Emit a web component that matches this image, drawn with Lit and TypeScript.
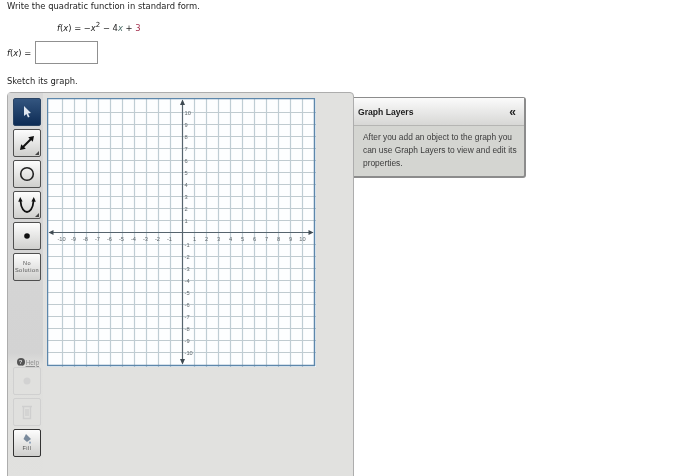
import { LitElement, html, css, svg } from "lit";
import { customElement } from "lit/decorators.js";

const X0 = 182.5, Y0 = 232.5, U = 12, L = 47.5, T = 98.5, R = 314.5, B = 365.5;
const ticks = Array.from({ length: 21 }, (_, i) => i - 10);

function plot() {
  const px = (v: number) => v - 47;
  const py = (v: number) => v - 98;
  return html`<svg class="plot" width="269" height="269" viewBox="0 0 269 269">
    <rect x="0" y="0" width="269" height="269" fill="#fdfeff"></rect>
    ${ticks.map((k) => k === 0 ? null : svg`
      <line x1=${px(X0 + k * U)} x2=${px(X0 + k * U)} y1="0" y2="269" stroke="#bfcdd4" stroke-width="1.2"></line>
      <line y1=${py(Y0 - k * U)} y2=${py(Y0 - k * U)} x1="0" x2="269" stroke="#c0cbd0" stroke-width="1.2"></line>
    `)}
    <rect x=${px(L)} y=${py(T)} width=${R - L} height=${B - T} fill="none" stroke="#5d87ab" stroke-width="1.5"></rect>
    <line x1=${px(L) + 2} x2=${px(R) - 2} y1=${py(Y0)} y2=${py(Y0)} stroke="#56646e" stroke-width="1.2"></line>
    <line y1=${py(T) + 2} y2=${py(B) - 2} x1=${px(X0)} x2=${px(X0)} stroke="#56646e" stroke-width="1.2"></line>
    <path d="M${px(L) + 1} ${py(Y0)} l5 -2.5 v5 z M${px(R) - 1} ${py(Y0)} l-5 -2.5 v5 z M${px(X0)} ${py(T) + 1} l-2.5 5.5 h5 z M${px(X0)} ${py(B) - 1} l-2.5 -5.5 h5 z" fill="#3f4a52"></path>
    ${ticks.map((k) => k === 0 ? null : svg`
      <text class="tick" x=${px(X0 + k * U) + (k < 0 ? -1 : 0)} y=${py(Y0) + 8} text-anchor="middle">${k}</text>
      <text class="tick" x=${px(X0) + 2} y=${py(Y0 - k * U) + 2.5}>${k}</text>
    `)}
  </svg>`;
}

@customElement("app-root")
export class AppRoot extends LitElement {
  static styles = css`
    :host {
      display: block;
      width: 700px;
      height: 476px;
      overflow: hidden;
      background: #fff;
      font-family: "DejaVu Sans", Verdana, sans-serif;
      font-size: 8.4px;
      color: #222;
      filter: blur(0.3px);
    }
    .q { padding: 0 0 0 7px; height: 12px; line-height: 12px; }
    .formula { margin: 10px 0 0 57px; height: 12px; line-height: 12px; white-space: pre; }
    .formula i { font-style: italic; }
    .formula sup { font-size: 7px; line-height: 0; vertical-align: 4px; }
    .formula .v { color: #4f6f6a; }
    .formula .c { color: #a5314f; }
    .answer { display: flex; align-items: center; gap: 4px; margin: 7px 0 0 7px; height: 23px; }
    .box { width: 61px; height: 21px; border: 1px solid #909090; background: #fff; }
    .sketch { margin: 11px 0 0 7px; height: 12px; line-height: 12px; }
    .row { display: flex; align-items: flex-start; margin: 5px 0 0 7px; }
    .panel {
      width: 345px;
      height: 400px;
      border: 1px solid #adadad;
      border-radius: 4px 4px 0 0;
      background: #e1e1df;
      display: flex;
    }
    .tools {
      width: 35px;
      height: 100%;
      flex: none;
      background: linear-gradient(#d8d8d8 0, #d3d3d3 260px, #dfdfdd 272px, #e1e1df 100%);
      display: flex;
      flex-direction: column;
      align-items: flex-end;
      padding-top: 5px;
      box-sizing: border-box;
      font-family: "Liberation Sans", Arial, sans-serif;
    }
    .btn {
      width: 26px;
      height: 26px;
      margin: 0 2px 3px 0;
      border: 1px solid #4f4f4f;
      border-radius: 2px;
      background: linear-gradient(#fdfdfd, #cfcfcd);
      display: flex;
      align-items: center;
      justify-content: center;
      position: relative;
      flex: none;
      color: #555;
      font-size: 5.6px;
      line-height: 7.5px;
      text-align: center;
      letter-spacing: 0.5px;
    }
    .btn.on { background: linear-gradient(#33557f, #0e2c55); border-color: #2a4464; }
    .btn.off { border-color: #d0d0d0; background: #e0e0de; color: #cfcfcf; }
    .btn.fill { flex-direction: column; border-color: #333; }
    .corner {
      position: absolute;
      right: 1px;
      bottom: 1px;
      width: 0;
      height: 0;
      border-left: 4px solid transparent;
      border-bottom: 4px solid #444;
    }
    .help {
      display: flex;
      align-items: center;
      gap: 1px;
      height: 10px;
      margin: 73px 4px 0 0;
      font-size: 6.5px;
      color: #8f8f8f;
      text-decoration: underline;
    }
    .help b {
      width: 8px;
      height: 8px;
      border-radius: 50%;
      background: #555;
      color: #ddd;
      font-size: 6px;
      line-height: 8px;
      text-align: center;
      display: block;
    }
    .plot-wrap { margin: 5px 0 0 4px; }
    .plot { display: block; }
    .tick { font: 5.7px "Liberation Sans", Arial, sans-serif; fill: #5f676c; }
    .layers {
      width: 170px;
      margin-top: 5px;
      border: 1px solid #8c8c8c;
      border-width: 1px 2px 2px 0;
      border-radius: 0 3px 3px 0;
      background: #d4d5d1;
      font-family: "Liberation Sans", Arial, sans-serif;
      flex: none;
    }
    .lhead {
      height: 27px;
      background: linear-gradient(#fbfbfb, #d7d7d5);
      border-bottom: 1px solid #b5b5b3;
      display: flex;
      align-items: center;
      justify-content: space-between;
      padding: 0 8px 0 4px;
      font-weight: bold;
      font-size: 8.6px;
      color: #222;
    }
    .lhead span:last-child { font-size: 12px; }
    .lbody {
      padding: 5px 6px 5px 9px;
      font-size: 8.4px;
      line-height: 13.2px;
      color: #3c3c3c;
    }
  `;

  render() {
    return html`
      <div class="q">Write the quadratic function in standard form.</div>
      <div class="formula"><i>f</i>(<i>x</i>) = −<i>x</i><sup>2</sup> − 4<i class="v">x</i> + <span class="c">3</span></div>
      <div class="answer"><span><i>f</i>(<i>x</i>) =</span><div class="box"></div></div>
      <div class="sketch">Sketch its graph.</div>
      <div class="row">
        <div class="panel">
          <div class="tools">
            <div class="btn on">
              <svg width="12" height="14" viewBox="0 0 12 14"><path d="M3 1 L3 11 L5.4 9 L7 12.5 L8.6 11.8 L7 8.4 L10 8 Z" fill="#dfe6f0"></path></svg>
            </div>
            <div class="btn">
              <svg width="18" height="18" viewBox="0 0 18 18"><path d="M4.5 13.5 L13.5 4.5" stroke="#111" stroke-width="2"></path><path d="M2 16 L3.2 10.2 L7.8 14.8 Z M16 2 L14.8 7.8 L10.2 3.2 Z" fill="#111"></path></svg>
              <span class="corner"></span>
            </div>
            <div class="btn">
              <svg width="18" height="18" viewBox="0 0 18 18"><circle cx="9" cy="9" r="6.3" fill="none" stroke="#222" stroke-width="1.6"></circle></svg>
            </div>
            <div class="btn">
              <svg width="20" height="20" viewBox="0 0 20 20"><path d="M3.5 6 C4 14 7.5 17 10 17 C12.5 17 16 14 16.5 6" fill="none" stroke="#111" stroke-width="1.8"></path><path d="M3.2 2 L1.2 6.8 L5.6 6.6 Z M16.8 2 L18.8 6.8 L14.4 6.6 Z" fill="#111"></path></svg>
              <span class="corner"></span>
            </div>
            <div class="btn">
              <svg width="8" height="8" viewBox="0 0 8 8"><circle cx="4" cy="4" r="2.8" fill="#111"></circle></svg>
            </div>
            <div class="btn">No<br />Solution</div>
            <div class="help"><b>?</b><span>Help</span></div>
            <div class="btn off">
              <svg width="10" height="10" viewBox="0 0 10 10"><circle cx="5" cy="5" r="3.5" fill="#d2d2d2"></circle></svg>
            </div>
            <div class="btn off">
              <svg width="12" height="16" viewBox="0 0 12 16"><path d="M1 2.5 H11 M2.5 3 V14.5 H9.5 V3 M5 5 V12 M7 5 V12" fill="none" stroke="#cfcfcf" stroke-width="1.4"></path></svg>
            </div>
            <div class="btn fill">
              <svg width="11" height="12" viewBox="0 0 11 12"><path d="M4 1 L1.5 6 L5 9 L9 6 Z" fill="#7a8a9c"></path><path d="M8 8 q1.5 2 0 3 q-1.5 -1 0 -3" fill="#5f7fa5"></path></svg>
              <span>Fill</span>
            </div>
          </div>
          <div class="plot-wrap">${plot()}</div>
        </div>
        <div class="layers">
          <div class="lhead"><span>Graph Layers</span><span>«</span></div>
          <div class="lbody">After you add an object to the graph you can use Graph Layers to view and edit its properties.</div>
        </div>
      </div>
    `;
  }
}
